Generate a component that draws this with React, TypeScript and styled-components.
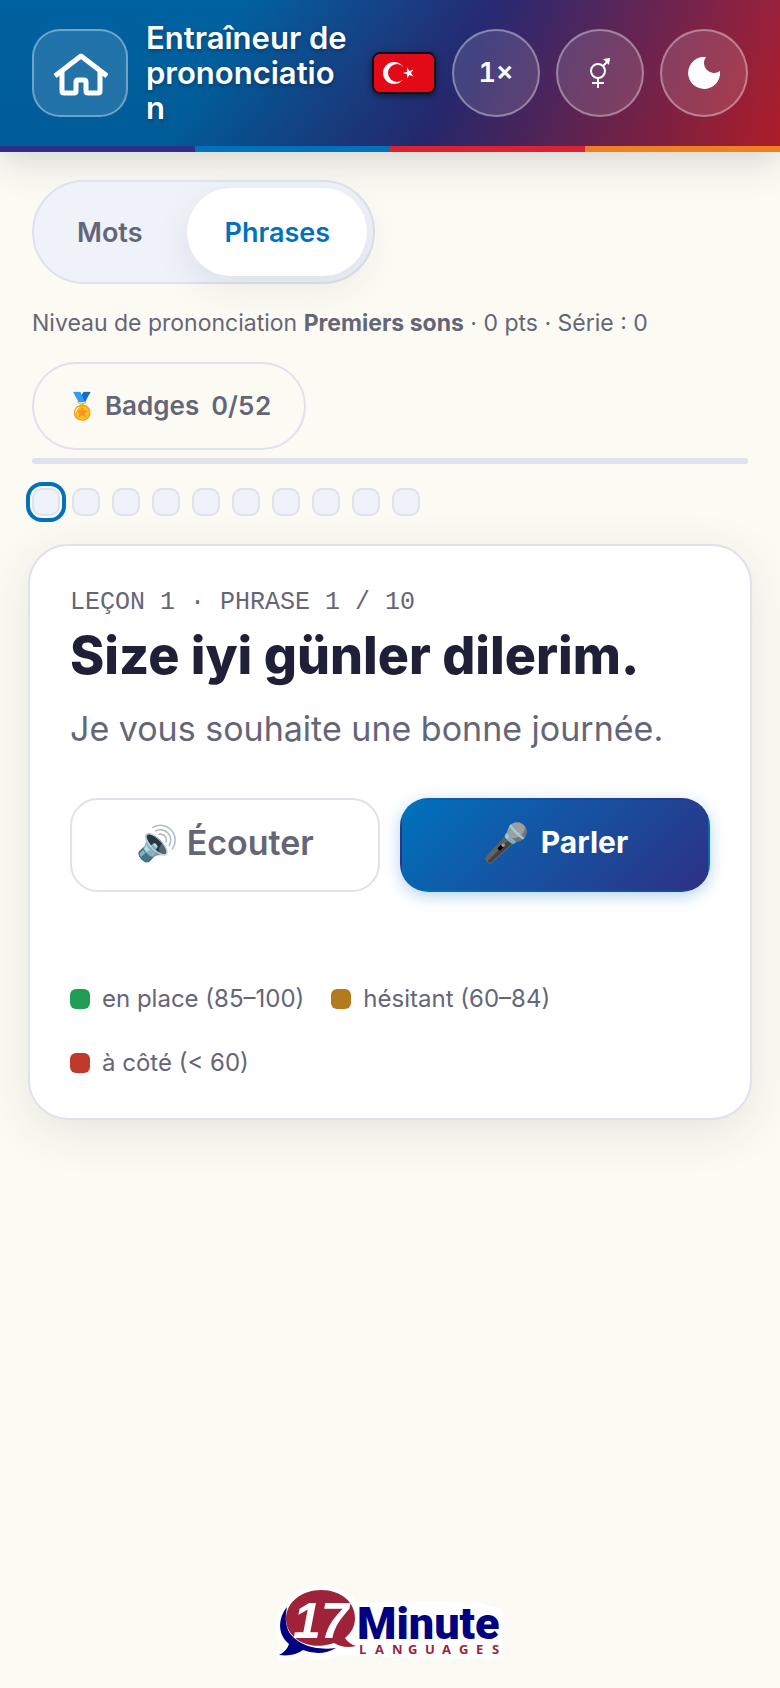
import React, { useState } from 'react';
import styled, { createGlobalStyle } from 'styled-components';

const GlobalStyle = createGlobalStyle`
  * {
    box-sizing: border-box;
  }
  body {
    margin: 0;
    background: #fcfbf3;
    color: #646678;
    font-family: Inter, "Liberation Sans", sans-serif;
  }
  button {
    font-family: inherit;
    cursor: pointer;
  }
`;

const Page = styled.div`
  min-height: 100vh;
  display: flex;
  flex-direction: column;
`;

const Header = styled.header`
  background: linear-gradient(180deg, rgba(0, 0, 0, 0.14), rgba(0, 0, 0, 0.2)),
    linear-gradient(118deg, #0072bc 0%, #0072bc 28%, #2e3085 58%, #d92332 100%);
  box-shadow: 0 8px 36px rgba(30, 30, 50, 0.18);
`;

const HeaderRow = styled.div`
  display: flex;
  align-items: center;
  gap: 16px;
  padding: 20px 32px 21px;
`;

const Stripes = styled.div`
  display: grid;
  grid-template-columns: repeat(4, 1fr);
  height: 6px;
`;

const Stripe = styled.div<{ $color: string }>`
  background: ${({ $color }) => $color};
`;

const HeaderButton = styled.button<{ $square?: boolean }>`
  display: flex;
  align-items: center;
  justify-content: center;
  flex: none;
  width: ${({ $square }) => ($square ? 96 : 88)}px;
  height: 88px;
  padding: 0;
  border: 2px solid rgba(255, 255, 255, 0.35);
  border-radius: ${({ $square }) => ($square ? '28px' : '50%')};
  background: rgba(255, 255, 255, 0.13);
  color: #fff;
  font-size: 27px;
  font-weight: 600;
  font-variant-numeric: tabular-nums;
`;

const Title = styled.h1`
  flex: 1;
  min-width: 0;
  margin: 0;
  padding: 0 6px 0 2px;
  color: #fff;
  font-size: 31px;
  font-weight: 600;
  line-height: 35px;
  overflow-wrap: anywhere;
  text-shadow: 0 2px 4px rgba(0, 0, 0, 0.3);
`;

const Flag = styled.svg`
  flex: none;
  width: 64px;
  height: 42px;
  border-radius: 8px;
  border: 2px solid #1a0a14;
  box-shadow: 0 2px 6px rgba(0, 0, 0, 0.5);
`;

const Main = styled.main`
  display: flex;
  flex-direction: column;
  align-items: flex-start;
  padding: 28px 32px;
`;

const Tabs = styled.div`
  display: flex;
  gap: 8px;
  padding: 6px;
  border: 2px solid #dfe1ec;
  border-radius: 52px;
  background: #eff2f9;
`;

const Tab = styled.button<{ $active: boolean }>`
  height: 88px;
  padding: 0 37px;
  border: 0;
  border-radius: 44px;
  background: ${({ $active }) => ($active ? '#fff' : 'transparent')};
  box-shadow: ${({ $active }) => ($active ? '0 12px 36px rgba(30, 30, 50, 0.08)' : 'none')};
  color: ${({ $active }) => ($active ? '#0072bc' : '#646678')};
  font-size: 27px;
  font-weight: 600;
`;

const Level = styled.p`
  margin: 24px 0;
  font-size: 23px;
  line-height: 30px;
`;

const BadgesButton = styled.button`
  display: flex;
  align-items: center;
  gap: 12px;
  height: 88px;
  padding: 0 32px 2px;
  border: 2px solid #dfe1ec;
  border-radius: 44px;
  background: transparent;
  color: #646678;
  font-size: 26px;
  font-weight: 600;
  font-variant-numeric: tabular-nums;
`;

const Progress = styled.div`
  align-self: stretch;
  height: 6px;
  margin-top: 8px;
  border-radius: 3px;
  background: #dfe1ec;
`;

const Steps = styled.div`
  display: flex;
  gap: 12px;
  margin: 24px 0 28px;
`;

const Step = styled.button<{ $current: boolean }>`
  width: 28px;
  height: 28px;
  padding: 0;
  border: 2px solid #dfe1ec;
  border-radius: 10px;
  background: #eff2f9;
  outline: ${({ $current }) => ($current ? '4px solid #0072bc' : 'none')};
  outline-offset: 2px;
`;

const Card = styled.section`
  align-self: stretch;
  margin: 0 -4px;
  padding: 42px 40px 40px;
  border: 2px solid #dfe1ec;
  border-radius: 40px;
  background: #fff;
  box-shadow: 0 12px 48px rgba(30, 30, 50, 0.1);
`;

const Eyebrow = styled.div`
  font-family: "Liberation Mono", monospace;
  font-size: 25px;
  line-height: 30px;
`;

const Phrase = styled.h2`
  margin: 6px 0 20px;
  color: #1f2038;
  font-size: 52px;
  font-weight: 800;
  line-height: 64px;
`;

const Translation = styled.p`
  margin: 0 0 48px;
  font-size: 34px;
  line-height: 42px;
`;

const Actions = styled.div`
  display: grid;
  grid-template-columns: 1fr 1fr;
  gap: 20px;
`;

const ActionButton = styled.button<{ $primary?: boolean }>`
  display: flex;
  align-items: center;
  justify-content: center;
  gap: 12px;
  height: 94px;
  padding: 0 12px 6px;
  border: 2px solid ${({ $primary }) => ($primary ? 'transparent' : '#dfe1ec')};
  border-radius: 28px;
  background: ${({ $primary }) => ($primary ? 'linear-gradient(135deg, #0072bc, #2e3085)' : '#fff')};
  box-shadow: ${({ $primary }) => ($primary ? '0 4px 16px rgba(0, 114, 188, 0.3)' : 'none')};
  color: ${({ $primary }) => ($primary ? '#fff' : '#646678')};
  font-size: ${({ $primary }) => ($primary ? 30 : 34)}px;
  font-weight: ${({ $primary }) => ($primary ? 700 : 600)};
`;

const Mic = styled.span`
  font-size: 38px;
`;

const Legend = styled.ul`
  display: flex;
  flex-wrap: wrap;
  gap: 34px 27px;
  margin: 92px 0 0;
  padding: 0;
  list-style: none;
  font-size: 24px;
  line-height: 30px;
`;

const LegendItem = styled.li`
  display: flex;
  align-items: center;
  gap: 12px;
`;

const Swatch = styled.span<{ $color: string }>`
  width: 20px;
  height: 20px;
  border-radius: 6px;
  background: ${({ $color }) => $color};
`;

const Footer = styled.footer`
  display: flex;
  justify-content: center;
  margin-top: auto;
  padding: 24px 32px;
`;

const stripes = ['#2e3085', '#0072bc', '#d92332', '#f08122'];

const legend = [
  { color: '#1f9d55', label: 'en place (85–100)' },
  { color: '#b47b1e', label: 'hésitant (60–84)' },
  { color: '#c0392b', label: 'à côté (< 60)' },
];

function HomeIcon() {
  return (
    <svg width="56" height="48" viewBox="0 0 56 48" fill="none" stroke="#fff" strokeWidth="5" strokeLinejoin="round">
      <path d="M3 27 L29 7 L55 27" />
      <path d="M10 22 V42 Q10 44 12 44 H22 Q24 44 24 42 V33 Q24 31 26 31 H32 Q34 31 34 33 V42 Q34 44 36 44 H46 Q48 44 48 42 V22" />
    </svg>
  );
}

function MoonIcon() {
  return (
    <svg width="32" height="32" viewBox="0 0 32 32" fill="#fff">
      <path d="M18 0 A16 16 0 1 0 32 14 A10 10 0 0 1 18 0 Z" />
    </svg>
  );
}

function GenderIcon() {
  return (
    <svg width="24" height="32" viewBox="0 0 24 32" fill="none" stroke="#fff" strokeWidth="2">
      <circle cx="10" cy="14" r="7" />
      <path d="M10 21 V31 M4 26 H16 M15 9 L21 3" />
      <path d="M15 2 L22 1 L21 8 Z" fill="#fff" stroke="none" />
    </svg>
  );
}

function TurkishFlag() {
  return (
    <Flag viewBox="0 0 60 38" preserveAspectRatio="none" role="img" aria-label="Türkçe">
      <rect width="60" height="38" fill="#e30a17" />
      <circle cx="20" cy="19" r="11" fill="#fff" />
      <circle cx="23" cy="19" r="9" fill="#e30a17" />
      <path d="M29 19 L33 17.7 L33 13.5 L35.5 17 L39.5 15.6 L37 19 L39.5 22.4 L35.5 21 L33 24.5 L33 20.3 Z" fill="#fff" />
    </Flag>
  );
}

function Logo() {
  return (
    <svg width="230" height="80" viewBox="0 0 230 80" role="img" aria-label="17 Minute Languages">
      <g fill="#fff" stroke="#fff" strokeWidth="12" strokeLinejoin="round">
        <ellipse cx="46" cy="35" rx="35" ry="28" />
        <path d="M12 24 Q2 48 13 60 L7 71 Q18 72 28 66 Q48 74 62 65 L222 70 V30 L200 24 H80" />
      </g>
      <path d="M12 23 C3 34 2 50 14 60 Q12 67 4 71 Q19 73 28 66 Q46 73 61 64 C40 67 20 60 13 46 Q9 36 12 23 Z" fill="#000080" />
      <path d="M46 6 C66 6 80 18 80 34 C80 43 76 49 70 54 Q74 60 81 62 Q69 65 59 59 C33 68 11 54 11 35 C11 18 27 6 46 6 Z" fill="#9e2339" />
      <text x="18" y="54" fill="#fff" fontFamily="Liberation Sans, sans-serif" fontSize="50" fontWeight="700" fontStyle="italic">17</text>
      <text x="82" y="55" fill="#000080" fontFamily="Roboto, sans-serif" fontSize="45" fontWeight="900">Minute</text>
      <text x="84 100 117 133 150 167 184 201 217" y="70" fill="#9e2339" fontFamily="Open Sans, sans-serif" fontSize="13" fontWeight="700">LANGUAGES</text>
    </svg>
  );
}

export default function App() {
  const [tab, setTab] = useState('Phrases');
  const [step, setStep] = useState(0);

  return (
    <Page>
      <GlobalStyle />
      <Header>
        <HeaderRow>
          <HeaderButton $square aria-label="Accueil"><HomeIcon /></HeaderButton>
          <Title>Entraîneur de prononciation</Title>
          <TurkishFlag />
          <HeaderButton>1×</HeaderButton>
          <HeaderButton aria-label="Voix"><GenderIcon /></HeaderButton>
          <HeaderButton aria-label="Mode sombre"><MoonIcon /></HeaderButton>
        </HeaderRow>
        <Stripes>
          {stripes.map((color) => <Stripe key={color} $color={color} />)}
        </Stripes>
      </Header>

      <Main>
        <Tabs>
          {['Mots', 'Phrases'].map((name) => (
            <Tab key={name} $active={tab === name} onClick={() => setTab(name)}>{name}</Tab>
          ))}
        </Tabs>
        <Level>Niveau de prononciation <b>Premiers sons</b> · 0 pts · Série : 0</Level>
        <BadgesButton><span>🏅 Badges</span> <span>0/52</span></BadgesButton>
        <Progress />
        <Steps>
          {Array.from({ length: 10 }, (_, i) => (
            <Step key={i} $current={i === step} aria-label={`Phrase ${i + 1}`} onClick={() => setStep(i)} />
          ))}
        </Steps>

        <Card>
          <Eyebrow>LEÇON 1 · PHRASE {step + 1} / 10</Eyebrow>
          <Phrase lang="tr">Size iyi günler dilerim.</Phrase>
          <Translation>Je vous souhaite une bonne journée.</Translation>
          <Actions>
            <ActionButton>🔊 Écouter</ActionButton>
            <ActionButton $primary><Mic>🎤</Mic> Parler</ActionButton>
          </Actions>
          <Legend>
            {legend.map(({ color, label }) => (
              <LegendItem key={label}><Swatch $color={color} />{label}</LegendItem>
            ))}
          </Legend>
        </Card>
      </Main>

      <Footer><Logo /></Footer>
    </Page>
  );
}
